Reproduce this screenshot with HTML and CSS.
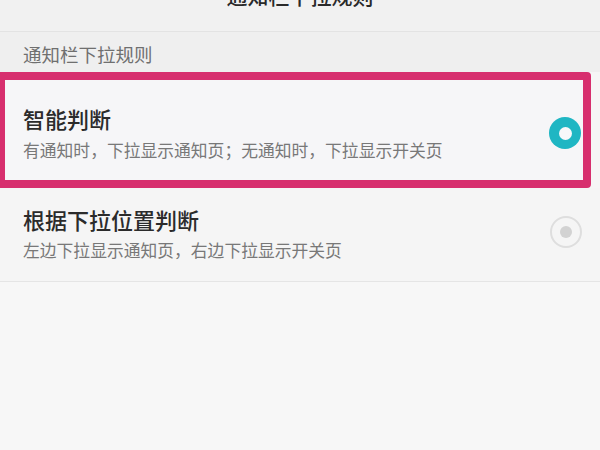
FILE: index.html
```html
<!DOCTYPE html>
<html lang="zh-CN">
<head>
<meta charset="utf-8">
<title>通知栏下拉规则</title>
<link rel="stylesheet" href="styles.css">
</head>
<body>
<div class="page">
  <header class="topbar">
    <div class="topbar-title">通知栏下拉规则</div>
  </header>
  <div class="section-label">通知栏下拉规则</div>
  <div class="option option-selected">
    <div class="option-text">
      <div class="option-title">智能判断</div>
      <div class="option-desc">有通知时，下拉显示通知页；无通知时，下拉显示开关页</div>
    </div>
    <span class="radio radio-on"></span>
  </div>
  <div class="option option-plain">
    <div class="option-text">
      <div class="option-title">根据下拉位置判断</div>
      <div class="option-desc">左边下拉显示通知页，右边下拉显示开关页</div>
    </div>
    <span class="radio radio-off"></span>
  </div>
  <div class="rest"></div>
</div>
</body>
</html>
```
FILE: styles.css
```css
html, body {
  margin: 0;
  padding: 0;
}
body {
  width: 600px;
  height: 450px;
  overflow: hidden;
  background: #f6f6f6;
  font-family: "Noto Sans CJK SC", "Noto Sans", sans-serif;
}
.page {
  display: flex;
  flex-direction: column;
  height: 450px;
}
.topbar {
  height: 31px;
  overflow: hidden;
  background: #f1f1f1;
  border-bottom: 1px solid #e3e3e3;
  display: flex;
  justify-content: center;
}
.topbar-title {
  margin-top: -19px;
  font-size: 21px;
  line-height: 28px;
  color: #2a2a2a;
  font-weight: 500;
}
.section-label {
  height: 27px;
  padding: 13px 0 0 23px;
  font-size: 18.5px;
  line-height: 18px;
  color: #6f6f6f;
  background: #efefef;
}
.option {
  display: flex;
  align-items: center;
}
.option-selected {
  margin: 0 9px 0 -3px;
  border: 8px solid #d72f6e;
  border-radius: 4px;
  background: #f6f6f8;
  padding: 24px 2px 18px 18px;
}
.option-plain {
  padding: 17px 18px 19px 23px;
  border-bottom: 1px solid #e5e5e5;
  background: #f5f5f5;
}
.option-text {
  flex: 1;
  display: flex;
  flex-direction: column;
  gap: 6px;
}
.option-plain .option-text {
  gap: 5px;
}
.option-title {
  font-size: 22px;
  line-height: 28px;
  color: #2b2b2b;
  font-weight: 500;
}
.option-desc {
  font-size: 16.8px;
  line-height: 24px;
  color: #787878;
}
.radio {
  width: 32px;
  height: 32px;
  border-radius: 50%;
  box-sizing: border-box;
  display: flex;
  align-items: center;
  justify-content: center;
}
.radio-on {
  background: #1fb6c3;
}
.radio-on::after {
  content: "";
  width: 13px;
  height: 13px;
  border-radius: 50%;
  background: #f8f8fa;
}
.radio-off {
  border: 2px solid #dedede;
  margin-bottom: 4px;
}
.radio-off::after {
  content: "";
  width: 12px;
  height: 12px;
  border-radius: 50%;
  background: #d2d2d2;
}
.rest {
  flex: 1;
  background: #f7f7f7;
}
```
